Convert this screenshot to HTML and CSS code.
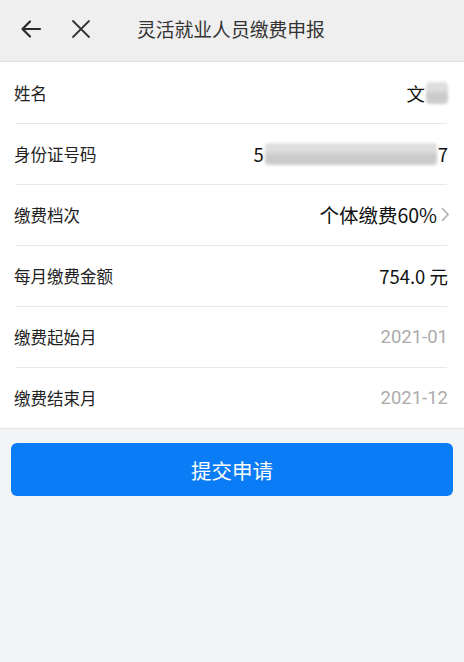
FILE: index.html
```html
<!DOCTYPE html>
<html lang="zh-CN">
<head>
  <meta charset="UTF-8">
  <meta name="viewport" content="width=device-width, initial-scale=1.0">
  <title>灵活就业人员缴费申报</title>
  <link rel="stylesheet" href="styles.css">
</head>
<body>
  <header class="topbar">
    <button class="icon-btn back" aria-label="返回">
      <svg width="22" height="22" viewBox="0 0 22 22"><path d="M20 11H3M10 3.5L2.5 11 10 18.5" fill="none" stroke="#2b2b2b" stroke-width="2.2" stroke-linecap="round" stroke-linejoin="round"/></svg>
    </button>
    <button class="icon-btn close" aria-label="关闭">
      <svg width="20" height="20" viewBox="0 0 20 20"><path d="M2 2L18 18M18 2L2 18" fill="none" stroke="#333" stroke-width="1.8" stroke-linecap="round"/></svg>
    </button>
    <h1 class="title">灵活就业人员缴费申报</h1>
  </header>

  <!-- declaration form -->
  <ul class="form-list">
    <li class="row">
      <span class="label">姓名</span>
      <span class="value">文<span class="mask mask-name"></span></span>
    </li>
    <li class="row">
      <span class="label">身份证号码</span>
      <span class="value">5<span class="mask mask-id"></span>7</span>
    </li>
    <li class="row">
      <span class="label">缴费档次</span>
      <span class="value select">个体缴费60%
        <svg width="10" height="17" viewBox="0 0 10 17"><path d="M2 2l6 6.5-6 6.5" fill="none" stroke="#b5b5b5" stroke-width="1.8"/></svg>
      </span>
    </li>
    <li class="row">
      <span class="label">每月缴费金额</span>
      <span class="value">754.0 元</span>
    </li>
    <li class="row">
      <span class="label">缴费起始月</span>
      <span class="value muted">2021-01</span>
    </li>
    <li class="row">
      <span class="label">缴费结束月</span>
      <span class="value muted">2021-12</span>
    </li>
  </ul>

  <div class="actions">
    <button class="submit">提交申请</button>
  </div>
</body>
</html>
```

FILE: styles.css
```css
body {
  margin: 0;
  background-color: #f1f5f6;
  font-family: "Noto Sans CJK SC", "Noto Sans", sans-serif;
  color: #222;
}
.topbar {
  height: 62px;
  display: flex;
  align-items: center;
  background-color: #efefef;
  border-bottom: 1px solid #dcdcdc;
  box-sizing: border-box;
  padding-left: 20px;
  padding-bottom: 4px;
}
.icon-btn {
  background: none;
  border: none;
  padding: 0;
  display: flex;
  cursor: pointer;
}
.back {
  margin-right: 29px;
}
.close {
  margin-top: 1px;
}
.title {
  margin: 0 0 0 46px;
  font-size: 18.8px;
  font-weight: normal;
  color: #333;
}
.form-list {
  list-style: none;
  margin: 0;
  padding: 0;
  background-color: #fff;
  border-bottom: 1px solid #e4e4e4;
}
.row {
  height: 61px;
  display: flex;
  align-items: center;
  justify-content: space-between;
  padding: 0 16px 0 14px;
  position: relative;
}
.row + .row::before {
  content: "";
  position: absolute;
  top: 0;
  left: 16px;
  right: 17px;
  height: 1px;
  background-color: #e6e6e6;
}
.label {
  font-size: 16.5px;
  color: #222;
}
.value {
  display: flex;
  align-items: center;
  font-size: 18.5px;
  color: #111;
}
.select {
  font-size: 19.5px;
  margin-right: -2px;
}
.select svg {
  margin-left: 3px;
}
.muted {
  color: #ababab;
  font-family: Roboto, "Noto Sans", sans-serif;
}
.mask {
  display: inline-block;
  height: 22px;
  border-radius: 4px;
  background: linear-gradient(180deg, #e0e0e0 0%, #dcdcdc 40%, #cacaca 55%, #cccccc 100%);
  filter: blur(1.5px);
}
.mask-name {
  width: 22px;
  margin-left: 1px;
}
.mask-id {
  width: 172px;
  margin: 0 1px;
}
.actions {
  padding: 14px 11px;
}
.submit {
  display: block;
  width: 100%;
  height: 53px;
  border: none;
  border-radius: 6px;
  background-color: #0a7cf6;
  color: #fff;
  font-family: inherit;
  font-size: 20.5px;
  cursor: pointer;
}
```
